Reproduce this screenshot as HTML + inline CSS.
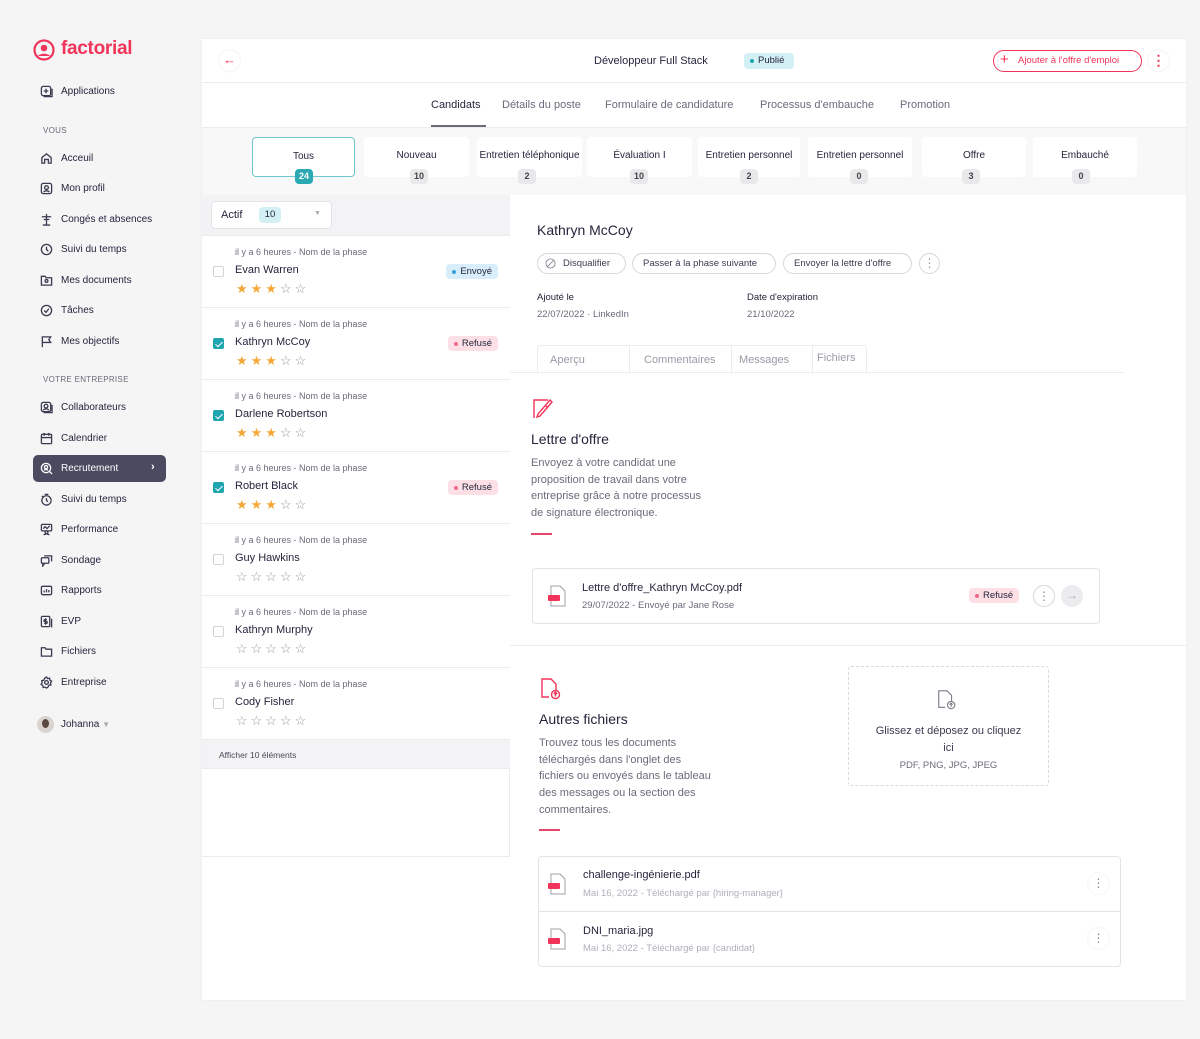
<!DOCTYPE html>
<html><head><meta charset="utf-8"><style>
*{box-sizing:border-box;margin:0;padding:0}
body{width:1200px;height:1039px;background:#f5f5f6;font-family:"Liberation Sans",sans-serif;color:#25253d;position:relative;overflow:hidden}
.a{position:absolute}
.t{position:absolute;white-space:nowrap}
.nav{position:absolute;left:40px;font-size:10px;color:#25253d;display:flex;align-items:center;gap:8px;height:14px}
.nav svg{width:13px;height:13px;fill:none;stroke:#3a3a50;stroke-width:1.4}
.sec{position:absolute;left:43px;font-size:8px;color:#6b6b7b;letter-spacing:.3px}
.stage{position:absolute;top:137px;height:40px;background:#fff;border-radius:4px;font-size:10px;color:#25253d;text-align:center;padding-top:13px}
.cnt{position:absolute;top:169px;height:15px;min-width:18px;padding:0 4px;border-radius:4px;background:#e9e9ec;font-size:9px;font-weight:bold;color:#444;text-align:center;line-height:15px;transform:translateX(-50%)}
.row{position:absolute;left:202px;width:308px;height:72px;border-bottom:1px solid #ececef;background:#fff}
.row .m{position:absolute;left:33px;top:11px;font-size:9px;color:#6b6b7b}
.row .n{position:absolute;left:33px;top:28px;font-size:11px;color:#25253d}
.row .cb{position:absolute;left:11px;top:30px;width:11px;height:11px;border:1px solid #d3d3d9;border-radius:2px;background:#fff}
.row .cb.on{background:#1fa5ae;border-color:#1fa5ae}
.row .cb.on:after{content:"";position:absolute;left:3px;top:1px;width:3px;height:6px;border:solid #fff;border-width:0 1.5px 1.5px 0;transform:rotate(45deg)}
.row .st{position:absolute;left:34px;top:46px;font-size:13px;letter-spacing:3px;color:#f5a83a;line-height:14px}
.row .st i{font-style:normal;color:#9a9aa6}
.bdg{position:absolute;right:12px;top:28px;height:15px;padding:0 6px 0 14px;border-radius:4px;font-size:9.5px;line-height:15px}
.bdg:before{content:"";position:absolute;left:6px;top:6px;width:4px;height:4px;border-radius:2px}
.env{background:#d8eefa;color:#25253d}.env:before{background:#3aa0e0}
.ref{background:#fde0e6;color:#25253d}.ref:before{background:#f06a8a}
.pill{position:absolute;top:253px;height:21px;border:1px solid #d6d6dc;border-radius:11px;font-size:9.5px;color:#3a3a50;line-height:19px;padding:0 10px}
.gray{color:#6b6b7b}
</style></head><body>

<svg class="a" style="left:33px;top:39px" width="22" height="22" viewBox="0 0 22 22"><circle cx="11" cy="11" r="9.5" fill="none" stroke="#f0345a" stroke-width="2.2"/><circle cx="11" cy="9" r="3.3" fill="#f0345a"/><path d="M5 17c2-3 10-3 12 0" fill="#f0345a"/></svg>
<div class="t" style="left:61px;top:38px;font-size:19px;font-weight:bold;color:#f0345a;letter-spacing:-.3px">factorial</div>

<div class="nav" style="top:84px"><svg viewBox="0 0 14 14"><rect x="1.5" y="1.5" width="10" height="10" rx="2"/><path d="M6.5 4v5M4 6.5h5M13 4v8.5H4"/></svg>Applications</div>
<div class="sec" style="top:126px">VOUS</div>
<div class="nav" style="top:151px"><svg viewBox="0 0 14 14"><path d="M2 12V6l5-4 5 4v6H9V8H5v4z"/></svg>Acceuil</div>
<div class="nav" style="top:181px"><svg viewBox="0 0 14 14"><rect x="1.5" y="1.5" width="11" height="11" rx="2"/><circle cx="7" cy="6" r="2"/><path d="M4 11c1-2 5-2 6 0"/></svg>Mon profil</div>
<div class="nav" style="top:212px"><svg viewBox="0 0 14 14"><path d="M2 4h10M7 1v12M3 13h8M4 7h6"/></svg>Congés et absences</div>
<div class="nav" style="top:242px"><svg viewBox="0 0 14 14"><circle cx="7" cy="7" r="5.5"/><path d="M7 4v3l2 2"/></svg>Suivi du temps</div>
<div class="nav" style="top:273px"><svg viewBox="0 0 14 14"><path d="M1.5 2.5h4l1 1.5h6v8h-11z"/><circle cx="7" cy="7.5" r="1.5"/></svg>Mes documents</div>
<div class="nav" style="top:303px"><svg viewBox="0 0 14 14"><circle cx="7" cy="7" r="5.5"/><path d="M4.5 7l2 2 3-4"/></svg>Tâches</div>
<div class="nav" style="top:334px"><svg viewBox="0 0 14 14"><path d="M2.5 13V2h9l-2 3 2 3h-9"/></svg>Mes objectifs</div>
<div class="sec" style="top:375px">VOTRE ENTREPRISE</div>
<div class="nav" style="top:400px"><svg viewBox="0 0 14 14"><rect x="1.5" y="1.5" width="10" height="10" rx="2"/><circle cx="6.5" cy="5.5" r="2"/><path d="M3.5 10c1-2 5-2 6 0M13 4v8.5H4"/></svg>Collaborateurs</div>
<div class="nav" style="top:431px"><svg viewBox="0 0 14 14"><rect x="1.5" y="2.5" width="11" height="10" rx="1"/><path d="M1.5 6h11M4.5 1v3M9.5 1v3"/></svg>Calendrier</div>
<div class="a" style="left:33px;top:455px;width:133px;height:27px;background:#4a4a60;border-radius:5px"></div>
<div class="nav" style="top:461px;color:#fff"><svg viewBox="0 0 14 14" style="stroke:#fff"><circle cx="6.5" cy="6.5" r="5"/><circle cx="6.5" cy="5.5" r="1.7"/><path d="M4.5 9c1-1.5 3-1.5 4 0M10 10l3 3"/></svg>Recrutement</div>
<div class="t" style="left:151px;top:461px;color:#fff;font-size:11px;font-weight:bold">&#8250;</div>
<div class="nav" style="top:492px"><svg viewBox="0 0 14 14"><circle cx="7" cy="8" r="5"/><path d="M7 5.5V8l1.5 1.5M5 1.5h4M2 3l1.5 1.5"/></svg>Suivi du temps</div>
<div class="nav" style="top:522px"><svg viewBox="0 0 14 14"><rect x="1.5" y="1.5" width="11" height="7" rx="1"/><circle cx="7" cy="10" r="1.5"/><path d="M4 13c1-1.5 5-1.5 6 0M3.5 6l2-2 2 2 3-3"/></svg>Performance</div>
<div class="nav" style="top:553px"><svg viewBox="0 0 14 14"><rect x="1.5" y="4" width="8" height="6" rx="1"/><path d="M4.5 2h8v6M3 10v3l2-3"/></svg>Sondage</div>
<div class="nav" style="top:583px"><svg viewBox="0 0 14 14"><rect x="1.5" y="2.5" width="11" height="9" rx="1.5"/><path d="M4.5 9V7M7 9V5.5M9.5 9V6.5"/></svg>Rapports</div>
<div class="nav" style="top:614px"><svg viewBox="0 0 14 14"><rect x="1.5" y="1.5" width="9" height="11" rx="1"/><path d="M6 3.5v7M7.5 5H5.2a1 1 0 000 2h1.6a1 1 0 010 2H4.5M12.5 4v9.5"/></svg>EVP</div>
<div class="nav" style="top:644px"><svg viewBox="0 0 14 14"><path d="M1.5 3h4l1 1.5h6v7.5h-11z"/></svg>Fichiers</div>
<div class="nav" style="top:675px"><svg viewBox="0 0 14 14"><circle cx="7" cy="7" r="2"/><path d="M7 1l1.2 1.8 2.1-.5.4 2.1 1.8 1.2-1.2 1.8.5 2.1-2.1.4L8.5 12 7 13l-1.5-1-2.1.4-.4-2.1L1.2 9l1.2-1.8L1.9 5l2.1-.4L5 2.5z"/></svg>Entreprise</div>
<div class="a" style="left:37px;top:716px;width:17px;height:17px;border-radius:50%;background:#d9d4cf"></div>
<div class="a" style="left:42px;top:719px;width:7px;height:9px;border-radius:50%;background:#5a4a40"></div>
<div class="t" style="left:61px;top:719px;font-size:10px">Johanna <span style="color:#aaa;font-size:8px">&#9660;</span></div>

<div class="a" style="left:202px;top:39px;width:984px;height:961px;background:#fff;box-shadow:0 0 3px rgba(0,0,0,.05)"></div>
<div class="a" style="left:202px;top:82px;width:984px;height:1px;background:#ececef"></div>
<div class="a" style="left:219px;top:50px;width:21px;height:21px;border-radius:50%;background:#fff;box-shadow:0 0 2px rgba(0,0,0,.12)"></div>
<div class="t" style="left:223px;top:52px;color:#f0345a;font-size:13px">&#8592;</div>
<div class="t" style="left:594px;top:55px;font-size:11px">Développeur Full Stack</div>
<div class="a" style="left:744px;top:53px;width:50px;height:16px;background:#d3f0f5;border-radius:4px;font-size:9.5px;line-height:16px;padding-left:14px">Publié</div>
<div class="a" style="left:750px;top:59px;width:4px;height:4px;border-radius:2px;background:#1fa5ae"></div>
<div class="a" style="left:993px;top:50px;width:149px;height:22px;border:1.3px solid #f0345a;border-radius:11px;color:#f0345a;font-size:9.5px;line-height:19px;padding-left:24px">Ajouter à l'offre d'emploi</div>
<div class="t" style="left:1000px;top:51px;color:#f0345a;font-size:15px">+</div>
<div class="a" style="left:1148px;top:50px;width:21px;height:21px;border-radius:50%;box-shadow:0 0 2px rgba(0,0,0,.12);color:#f0345a;text-align:center;font-size:14px;line-height:20px;font-weight:bold">&#8942;</div>

<div class="t" style="left:431px;top:99px;font-size:11px">Candidats</div>
<div class="a" style="left:431px;top:125px;width:55px;height:2px;background:#6b6b7b"></div>
<div class="t gray" style="left:502px;top:99px;font-size:11px">Détails du poste</div>
<div class="t gray" style="left:605px;top:99px;font-size:11px">Formulaire de candidature</div>
<div class="t gray" style="left:760px;top:99px;font-size:11px">Processus d'embauche</div>
<div class="t gray" style="left:900px;top:99px;font-size:11px">Promotion</div>
<div class="a" style="left:202px;top:127px;width:984px;height:68px;background:#f8f8f9;border-top:1px solid #ececef"></div>

<div class="stage" style="left:252px;width:103px;border:1.5px solid #6fc6cc">Tous</div>
<div class="cnt" style="left:304px;top:169px;background:#2aa9b2;color:#fff">24</div>
<div class="stage" style="left:364px;width:105px">Nouveau</div><div class="cnt" style="left:419px">10</div>
<div class="stage" style="left:477px;width:105px">Entretien téléphonique</div><div class="cnt" style="left:527px">2</div>
<div class="stage" style="left:587px;width:105px">Évaluation I</div><div class="cnt" style="left:639px">10</div>
<div class="stage" style="left:698px;width:102px">Entretien personnel</div><div class="cnt" style="left:749px">2</div>
<div class="stage" style="left:808px;width:104px">Entretien personnel</div><div class="cnt" style="left:859px">0</div>
<div class="stage" style="left:922px;width:104px">Offre</div><div class="cnt" style="left:971px">3</div>
<div class="stage" style="left:1033px;width:104px">Embauché</div><div class="cnt" style="left:1081px">0</div>

<div class="a" style="left:202px;top:195px;width:308px;height:662px;background:#fff;border-right:1px solid #ececef;border-bottom:1px solid #ececef"></div>
<div class="a" style="left:202px;top:195px;width:308px;height:41px;background:#f3f3f5;border-bottom:1px solid #ececef"></div>
<div class="a" style="left:211px;top:201px;width:121px;height:28px;background:#fff;border:1px solid #e4e4e8;border-radius:4px"></div>
<div class="t" style="left:221px;top:209px;font-size:11px">Actif</div>
<div class="a" style="left:259px;top:207px;width:22px;height:16px;border-radius:4px;background:#d3f0f5;font-size:9.5px;text-align:center;line-height:16px">10</div>
<div class="t" style="left:314px;top:210px;font-size:7px;color:#aaa">&#9660;</div>

<div class="row" style="top:236px"><div class="m">il y a 6 heures - Nom de la phase</div><div class="cb"></div><div class="n">Evan Warren</div><div class="st">★★★<i>☆☆</i></div><div class="bdg env">Envoyé</div></div>
<div class="row" style="top:308px"><div class="m">il y a 6 heures - Nom de la phase</div><div class="cb on"></div><div class="n">Kathryn McCoy</div><div class="st">★★★<i>☆☆</i></div><div class="bdg ref">Refusé</div></div>
<div class="row" style="top:380px"><div class="m">il y a 6 heures - Nom de la phase</div><div class="cb on"></div><div class="n">Darlene Robertson</div><div class="st">★★★<i>☆☆</i></div></div>
<div class="row" style="top:452px"><div class="m">il y a 6 heures - Nom de la phase</div><div class="cb on"></div><div class="n">Robert Black</div><div class="st">★★★<i>☆☆</i></div><div class="bdg ref">Refusé</div></div>
<div class="row" style="top:524px"><div class="m">il y a 6 heures - Nom de la phase</div><div class="cb"></div><div class="n">Guy Hawkins</div><div class="st"><i>☆☆☆☆☆</i></div></div>
<div class="row" style="top:596px"><div class="m">il y a 6 heures - Nom de la phase</div><div class="cb"></div><div class="n">Kathryn Murphy</div><div class="st"><i>☆☆☆☆☆</i></div></div>
<div class="row" style="top:668px"><div class="m">il y a 6 heures - Nom de la phase</div><div class="cb"></div><div class="n">Cody Fisher</div><div class="st"><i>☆☆☆☆☆</i></div></div>
<div class="a" style="left:202px;top:740px;width:308px;height:29px;background:#f3f3f5;border-bottom:1px solid #ececef;font-size:8.5px;color:#4a4a5a;padding:10px 0 0 17px">Afficher 10 éléments</div>

<div class="t" style="left:537px;top:222px;font-size:14px">Kathryn McCoy</div>
<div class="pill" style="left:537px;width:89px;padding-left:25px">Disqualifier</div>
<svg class="a" style="left:545px;top:258px" width="11" height="11" viewBox="0 0 12 12"><circle cx="6" cy="6" r="5" fill="none" stroke="#8a8a96"/><path d="M2.5 9.5l7-7" stroke="#8a8a96"/></svg>
<div class="pill" style="left:632px;width:144px">Passer à la phase suivante</div>
<div class="pill" style="left:783px;width:129px">Envoyer la lettre d'offre</div>
<div class="a" style="left:919px;top:253px;width:21px;height:21px;border:1px solid #d6d6dc;border-radius:50%;text-align:center;color:#999;font-size:12px;line-height:19px">&#8942;</div>
<div class="t" style="left:537px;top:292px;font-size:9.5px">Ajouté le</div>
<div class="t gray" style="left:537px;top:309px;font-size:9.5px">22/07/2022 · LinkedIn</div>
<div class="t" style="left:747px;top:292px;font-size:9.5px">Date d'expiration</div>
<div class="t gray" style="left:747px;top:309px;font-size:9.5px">21/10/2022</div>

<div class="a" style="left:537px;top:345px;width:330px;height:28px;border:1px solid #ececef;border-bottom:none;border-radius:3px 3px 0 0"></div>
<div class="a" style="left:629px;top:345px;width:1px;height:27px;background:#ececef"></div>
<div class="a" style="left:731px;top:345px;width:1px;height:27px;background:#ececef"></div>
<div class="a" style="left:812px;top:345px;width:1px;height:27px;background:#ececef"></div>
<div class="t" style="left:550px;top:354px;font-size:11px;color:#9a9aa6">Aperçu</div>
<div class="t" style="left:644px;top:354px;font-size:11px;color:#9a9aa6">Commentaires</div>
<div class="t" style="left:739px;top:354px;font-size:11px;color:#9a9aa6">Messages</div>
<div class="t" style="left:817px;top:352px;font-size:11px;color:#9a9aa6">Fichiers</div>
<div class="a" style="left:510px;top:372px;width:614px;height:1px;background:#ececef"></div>

<svg class="a" style="left:531px;top:397px" width="24" height="24" viewBox="0 0 24 24" fill="none" stroke="#f0345a" stroke-width="1.4"><path d="M3 21V3h14M21 5L9 19l-3 1 1-3L19 3z M14 8l3 3"/></svg>
<div class="t" style="left:531px;top:431px;font-size:14px">Lettre d'offre</div>
<div class="a gray" style="left:531px;top:455px;width:220px;font-size:11px;line-height:16.7px;white-space:nowrap">Envoyez à votre candidat une<br>proposition de travail dans votre<br>entreprise grâce à notre processus<br>de signature électronique.</div>
<div class="a" style="left:531px;top:533px;width:21px;height:2px;background:#e8456a"></div>

<div class="a" style="left:532px;top:568px;width:568px;height:56px;border:1px solid #e4e4e8;border-radius:4px"></div>
<svg class="a" style="left:547px;top:584px" width="20" height="24" viewBox="0 0 20 24" fill="none"><path d="M4 2h9l5 5v15H4z" stroke="#a0a0aa"/><rect x="1" y="11" width="12" height="6" rx="1" fill="#f0345a"/></svg>
<div class="t" style="left:582px;top:582px;font-size:11px">Lettre d'offre_Kathryn McCoy.pdf</div>
<div class="t gray" style="left:582px;top:600px;font-size:9.5px">29/07/2022 - Envoyé par Jane Rose</div>
<div class="bdg ref" style="left:969px;right:auto;top:588px">Refusé</div>
<div class="a" style="left:1033px;top:585px;width:22px;height:22px;border:1px solid #d6d6dc;border-radius:50%;text-align:center;color:#888;font-size:12px;line-height:20px">&#8942;</div>
<div class="a" style="left:1061px;top:585px;width:22px;height:22px;border-radius:50%;background:#ececef;text-align:center;color:#aaa;font-size:12px;line-height:21px">&#8594;</div>

<div class="a" style="left:510px;top:645px;width:676px;height:1px;background:#ececef"></div>

<svg class="a" style="left:539px;top:677px" width="24" height="24" viewBox="0 0 24 24" fill="none" stroke="#f0345a" stroke-width="1.4"><path d="M10 20H3V2h9l5 5v6"/><circle cx="16.5" cy="17.5" r="4"/><path d="M16.5 19.5v-4M14.8 17l1.7-1.7 1.7 1.7"/></svg>
<div class="t" style="left:539px;top:711px;font-size:14px">Autres fichiers</div>
<div class="a gray" style="left:539px;top:735px;width:220px;font-size:11px;line-height:16.7px;white-space:nowrap">Trouvez tous les documents<br>téléchargés dans l'onglet des<br>fichiers ou envoyés dans le tableau<br>des messages ou la section des<br>commentaires.</div>
<div class="a" style="left:539px;top:829px;width:21px;height:2px;background:#e8456a"></div>

<div class="a" style="left:848px;top:666px;width:201px;height:120px;border:1px dashed #d9d9de;border-radius:3px"></div>
<svg class="a" style="left:936px;top:688px" width="22" height="24" viewBox="0 0 24 24" fill="none" stroke="#7a7a86" stroke-width="1.2"><path d="M10 20H3V2h9l5 5v6"/><circle cx="16.5" cy="17.5" r="4"/><path d="M16.5 19.5v-4M14.8 17l1.7-1.7 1.7 1.7"/></svg>
<div class="a" style="left:848px;top:723px;width:201px;text-align:center;font-size:11px;line-height:17px;color:#3a3a50">Glissez et déposez ou cliquez<br>ici</div>
<div class="a gray" style="left:848px;top:760px;width:201px;text-align:center;font-size:9.5px">PDF, PNG, JPG, JPEG</div>

<div class="a" style="left:538px;top:856px;width:583px;height:111px;border:1px solid #e4e4e8;border-radius:4px"></div>
<div class="a" style="left:539px;top:911px;width:581px;height:1px;background:#e4e4e8"></div>
<svg class="a" style="left:547px;top:872px" width="20" height="24" viewBox="0 0 20 24" fill="none"><path d="M4 2h9l5 5v15H4z" stroke="#a0a0aa"/><rect x="1" y="11" width="12" height="6" rx="1" fill="#f0345a"/></svg>
<div class="t" style="left:583px;top:869px;font-size:11px">challenge-ingénierie.pdf</div>
<div class="t" style="left:583px;top:888px;font-size:9.5px;color:#b0b0ba">Mai 16, 2022 - Téléchargé par {hiring-manager}</div>
<div class="a" style="left:1088px;top:873px;width:21px;height:21px;border-radius:50%;box-shadow:0 0 2px rgba(0,0,0,.1);text-align:center;color:#888;font-size:12px;line-height:20px">&#8942;</div>
<svg class="a" style="left:547px;top:927px" width="20" height="24" viewBox="0 0 20 24" fill="none"><path d="M4 2h9l5 5v15H4z" stroke="#a0a0aa"/><rect x="1" y="11" width="12" height="6" rx="1" fill="#f0345a"/></svg>
<div class="t" style="left:583px;top:925px;font-size:11px">DNI_maria.jpg</div>
<div class="t" style="left:583px;top:943px;font-size:9.5px;color:#b0b0ba">Mai 16, 2022 - Téléchargé par {candidat}</div>
<div class="a" style="left:1088px;top:928px;width:21px;height:21px;border-radius:50%;box-shadow:0 0 2px rgba(0,0,0,.1);text-align:center;color:#888;font-size:12px;line-height:20px">&#8942;</div>

</body></html>
